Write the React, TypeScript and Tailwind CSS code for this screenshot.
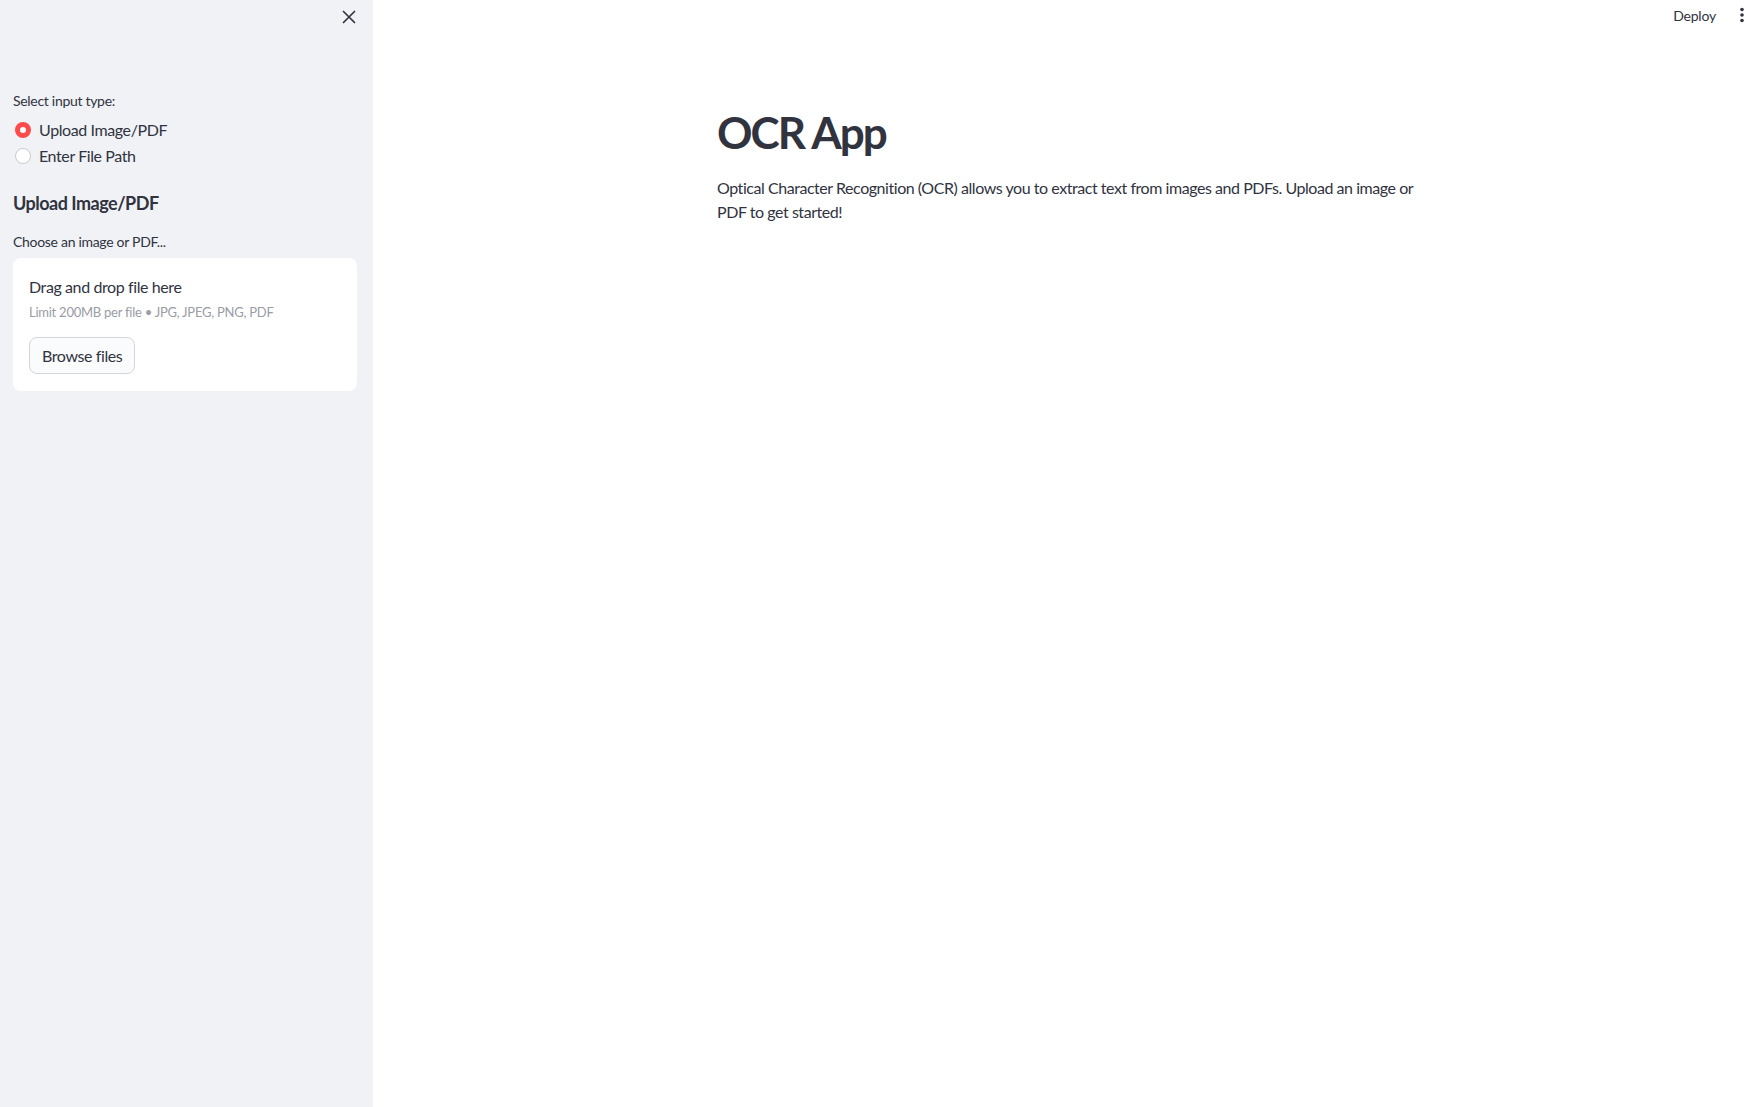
import React from "react";

const font = { fontFamily: "Lato, 'Noto Sans', sans-serif" };

function Radio({ checked, label }: { checked: boolean; label: string }) {
  return (
    <div className="flex items-center h-[24px] gap-[8px]">
      <span
        className={
          checked
            ? "block w-[16px] h-[16px] rounded-full border-[5px] border-[#ff4b4b] bg-white"
            : "block w-[16px] h-[16px] rounded-full border border-[#c9cacd] bg-white"
        }
      />
      <span className="text-[16px] leading-[24px] tracking-[-0.4px] text-[#31333f]">{label}</span>
    </div>
  );
}

export default function App() {
  return (
    <div className="flex w-full h-[1107px] bg-white text-[#31333f]" style={font}>
      <aside className="w-[373px] shrink-0 bg-[#f0f2f6] flex flex-col">
        <div className="h-[34px] flex items-center justify-end pr-[17px]">
          <svg width="14" height="14" viewBox="0 0 14 14" fill="none">
            <path d="M1.5 1.5L12.5 12.5M12.5 1.5L1.5 12.5" stroke="#31333f" strokeWidth="1.7" strokeLinecap="round" />
          </svg>
        </div>
        <div className="px-[13px] flex flex-col">
          <div className="mt-[57px] text-[14px] leading-[20px] tracking-[-0.3px]">Select input type:</div>
          <div className="mt-[7px] flex flex-col gap-[2px] pl-[2px]">
            <Radio checked label="Upload Image/PDF" />
            <Radio checked={false} label="Enter File Path" />
          </div>
          <div className="mt-[21px] text-[18px] leading-[28px] font-bold tracking-[-0.5px]">Upload Image/PDF</div>
          <div className="mt-[15px] text-[14px] leading-[20px] tracking-[-0.3px]">Choose an image or PDF...</div>
          <div className="mt-[6px] bg-white rounded-[8px] pl-[16px] pr-[16px] pt-[17px] pb-[17px] w-[344px]">
            <div className="text-[16px] leading-[24px] tracking-[-0.4px]">Drag and drop file here</div>
            <div className="mt-[3px] text-[13px] leading-[20px] tracking-[-0.25px] text-[#9a9ca6]">
              Limit 200MB per file • JPG, JPEG, PNG, PDF
            </div>
            <button className="mt-[15px] h-[37px] px-[12px] rounded-[8px] border border-[#d5d6d9] bg-[#fafbfc] text-[16px] tracking-[-0.4px] text-[#31333f]">
              Browse files
            </button>
          </div>
        </div>
      </aside>
      <main className="flex-1 flex flex-col">
        <div className="h-[30px] flex items-center justify-end pr-[17px] gap-[24px]">
          <span className="text-[14px] tracking-[-0.2px] text-[#31333f]">Deploy</span>
          <svg width="4" height="16" viewBox="0 0 4 16">
            <circle cx="2" cy="2.5" r="1.8" fill="#31333f" />
            <circle cx="2" cy="8" r="1.8" fill="#31333f" />
            <circle cx="2" cy="13.5" r="1.8" fill="#31333f" />
          </svg>
        </div>
        <div className="w-[700px] mx-auto">
          <h1 className="mt-[76px] text-[44px] leading-[52px] font-bold tracking-[-2px]">OCR App</h1>
          <p className="mt-[18px] text-[16px] leading-[24px] tracking-[-0.45px] whitespace-nowrap">
            Optical Character Recognition (OCR) allows you to extract text from images and PDFs. Upload an image or
            <br />
            PDF to get started!
          </p>
        </div>
      </main>
    </div>
  );
}
